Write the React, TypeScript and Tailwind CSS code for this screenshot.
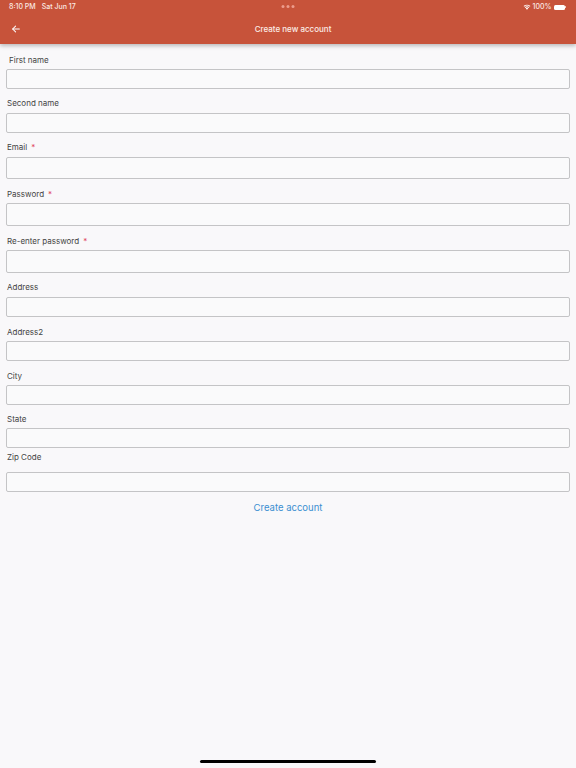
import React from "react";

type F = { label: string; req?: boolean; mt: string; gap: string; h: string; lx?: string };

const fields: F[] = [
  { label: "First name", mt: "mt-[11px]", gap: "mt-[4px]", h: "h-[20px]", lx: "pl-[9px]" },
  { label: "Second name", mt: "mt-[9px]", gap: "mt-[5px]", h: "h-[20px]" },
  { label: "Email", req: true, mt: "mt-[9px]", gap: "mt-[5px]", h: "h-[22px]" },
  { label: "Password", req: true, mt: "mt-[10px]", gap: "mt-[4px]", h: "h-[23px]" },
  { label: "Re-enter password", req: true, mt: "mt-[10px]", gap: "mt-[4px]", h: "h-[23px]" },
  { label: "Address", mt: "mt-[9px]", gap: "mt-[5px]", h: "h-[20px]" },
  { label: "Address2", mt: "mt-[10px]", gap: "mt-[4px]", h: "h-[20px]" },
  { label: "City", mt: "mt-[10px]", gap: "mt-[4px]", h: "h-[20px]" },
  { label: "State", mt: "mt-[9px]", gap: "mt-[4px]", h: "h-[20px]" },
  { label: "Zip Code", mt: "mt-[4px]", gap: "mt-[10px]", h: "h-[20px]" },
];

export default function App() {
  return (
    <div
      className="relative w-[576px] h-[768px] bg-[#f9f8fa] overflow-hidden"
      style={{ fontFamily: "Inter, 'Liberation Sans', sans-serif" }}
    >
      <div className="relative z-10 bg-[#c7533a] shadow-[0_2px_4px_rgba(0,0,0,0.25)] text-white">
        <div className="relative h-[14px] flex items-center justify-between px-[9px] text-[7px] font-medium text-[#fbe9e3]">
          <div className="flex gap-[6px]">
            <span>8:10 PM</span>
            <span>Sat Jun 17</span>
          </div>
          <div className="absolute left-1/2 -translate-x-1/2 top-[5px] flex gap-[2px]">
            <span className="w-[3px] h-[3px] rounded-full bg-[#ec9c8c]" />
            <span className="w-[3px] h-[3px] rounded-full bg-[#ec9c8c]" />
            <span className="w-[3px] h-[3px] rounded-full bg-[#ec9c8c]" />
          </div>
          <div className="flex items-center gap-[2px] pr-[1px]">
            <svg width="8" height="6" viewBox="0 0 16 12">
              <path d="M8 11.5 L5.6 8.8 A3.4 3.4 0 0 1 10.4 8.8 Z" fill="white" />
              <path d="M3.5 6.6 A6.4 6.4 0 0 1 12.5 6.6 L11.2 8 A4.6 4.6 0 0 0 4.8 8 Z" fill="white" />
              <path d="M1.2 4.2 A9.6 9.6 0 0 1 14.8 4.2 L13.6 5.5 A7.8 7.8 0 0 0 2.4 5.5 Z" fill="white" />
            </svg>
            <span>100%</span>
            <div className="flex items-center">
              <div className="w-[11px] h-[5px] rounded-[1.5px] bg-white" />
              <div className="w-[1px] h-[2px] bg-white/70 ml-[0.5px]" />
            </div>
          </div>
        </div>
        <div className="relative h-[30px] flex items-center justify-center pl-[10px]">
          <svg
            className="absolute left-[11px] top-[10px]"
            width="10"
            height="10"
            viewBox="0 0 24 24"
            fill="none"
            stroke="white"
            strokeWidth="2.5"
            strokeLinecap="round"
            strokeLinejoin="round"
          >
            <path d="M20 12H4" />
            <path d="M11 5l-7 7 7 7" />
          </svg>
          <span className="text-[8px] font-medium text-[#fcece6]">Create new account</span>
        </div>
      </div>

      <div className="flex flex-col">
        {fields.map((f) => (
          <div key={f.label} className={f.mt}>
            <div className={`h-[10px] leading-[10px] text-[8px] text-[#444] ${f.lx ?? "pl-[7px]"}`}>
              {f.label}
              {f.req && <span className="text-[#e0455c] ml-[4px]">*</span>}
            </div>
            <div
              className={`${f.gap} ${f.h} mx-[6px] border border-[#c4c4c6] rounded-[2px] bg-[#fafafb]`}
            />
          </div>
        ))}
        <div className="mt-[10px] h-[12px] leading-[12px] text-center text-[9.5px] text-[#3b8fd1]">
          Create account
        </div>
      </div>

      <div className="absolute left-[200px] top-[760px] w-[176px] h-[3px] rounded-full bg-black" />
    </div>
  );
}
